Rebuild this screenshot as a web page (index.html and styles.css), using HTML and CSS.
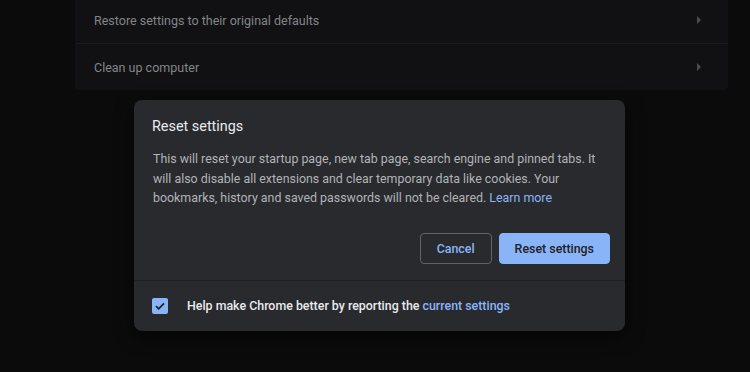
FILE: index.html
```html
<!DOCTYPE html>
<html lang="en">
<head>
  <meta charset="UTF-8" />
  <meta name="viewport" content="width=device-width, initial-scale=1.0" />
  <title>Reset settings</title>
  <link rel="stylesheet" href="styles.css">
</head>
<body>
  <div class="settings-card">
    <div class="settings-row">
      <span>Restore settings to their original defaults</span>
      <span class="row-arrow"></span>
    </div>
    <div class="settings-row">
      <span>Clean up computer</span>
      <span class="row-arrow"></span>
    </div>
  </div>

  <div class="dialog">
    <div class="dialog-title">Reset settings</div>
    <div class="dialog-body">
      This will reset your startup page, new tab page, search engine and pinned tabs. It
      will also disable all extensions and clear temporary data like cookies. Your
      bookmarks, history and saved passwords will not be cleared. <a href="#" class="link">Learn more</a>
    </div>
    <div class="dialog-buttons">
      <button class="btn-cancel">Cancel</button>
      <button class="btn-reset">Reset settings</button>
    </div>
    <div class="dialog-footer">
      <span class="checkbox">
        <svg width="12" height="12" viewBox="0 0 12 12"><path d="M2 6.2 4.7 8.8 10 3.4" fill="none" stroke="#202124" stroke-width="1.8"/></svg>
      </span>
      <span class="footer-text">Help make Chrome better by reporting the <a href="#" class="link">current settings</a></span>
    </div>
  </div>
</body>
</html>
```

FILE: styles.css
```css
body {
  font-family: Roboto, "Liberation Sans", Arial, sans-serif;
  background: #0b0b0c;
  margin: 0;
  padding: 0;
  height: 372px;
  overflow: hidden;
}

.settings-card {
  margin: -3px 0 0 75px;
  width: 653px;
  background: #111113;
  border-radius: 0 0 4px 4px;
}

.settings-row {
  display: flex;
  align-items: center;
  justify-content: space-between;
  height: 46px;
  padding: 0 27px 0 19px;
  font-size: 12.5px;
  color: #838589;
}

.settings-row + .settings-row {
  border-top: 1px solid #1b1c1e;
}

.row-arrow {
  width: 0;
  height: 0;
  border-top: 4px solid transparent;
  border-bottom: 4px solid transparent;
  border-left: 4px solid #4a4c50;
}

.dialog {
  margin: 10px 0 0 134px;
  width: 491px;
  background: #292a2d;
  border-radius: 8px;
  box-shadow: 0 6px 18px rgba(0, 0, 0, 0.6);
}

.dialog-title {
  padding: 17px 18px 12px 18px;
  font-size: 14.4px;
  line-height: 20px;
  color: #e8eaed;
}

.dialog-body {
  padding: 0 18px 0 19px;
  font-size: 12.4px;
  line-height: 19.5px;
  color: #b0b3b8;
}

.link {
  color: #8ab4f8;
  text-decoration: none;
}

.dialog-buttons {
  display: flex;
  justify-content: flex-end;
  gap: 7px;
  padding: 25px 15px 16px 0;
  border-bottom: 1px solid #1f2023;
}

button {
  height: 31px;
  font-family: inherit;
  font-size: 12.4px;
  font-weight: 500;
  border-radius: 4px;
  cursor: pointer;
}

.btn-cancel {
  padding: 0 16px;
  background: transparent;
  color: #8ab4f8;
  border: 1px solid #5f6368;
}

.btn-reset {
  padding: 0 15px;
  background: #8ab4f8;
  color: #202124;
  border: 1px solid #8ab4f8;
}

.dialog-footer {
  display: flex;
  align-items: center;
  height: 50px;
  padding: 0 18px;
}

.checkbox {
  display: flex;
  align-items: center;
  justify-content: center;
  width: 16px;
  height: 16px;
  border-radius: 2px;
  background: #8ab4f8;
  margin-right: 19px;
}

.footer-text {
  font-size: 12.4px;
  font-weight: 500;
  color: #e8eaed;
}
```
